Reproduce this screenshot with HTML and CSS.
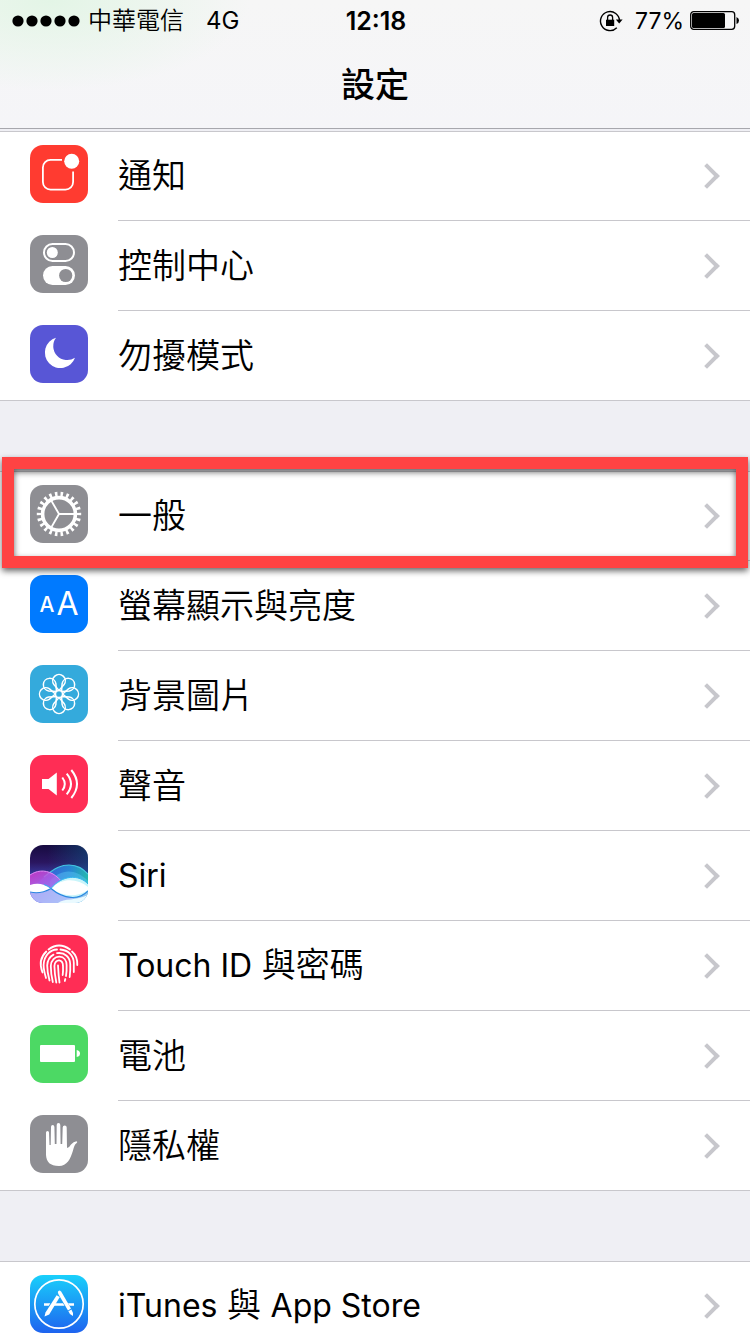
FILE: index.html
```html
<!DOCTYPE html>
<html lang="zh-Hant">

<head>
    <meta charset="UTF-8">
    <meta name="viewport" content="width=device-width, initial-scale=1.0">
    <title>設定</title>
    <link rel="stylesheet" href="styles.css">
</head>

<body>
    <header class="topbar">
        <div class="status">
            <div class="status-left">
                <svg class="signal" viewBox="0 0 68 12">
                    <circle cx="6" cy="6" r="5.6" />
                    <circle cx="20" cy="6" r="5.6" />
                    <circle cx="34" cy="6" r="5.6" />
                    <circle cx="48" cy="6" r="5.6" />
                    <circle cx="62" cy="6" r="5.6" />
                </svg>
                <span>中華電信</span>
                <span class="network">4G</span>
            </div>
            <div class="clock">12:18</div>
            <div class="status-right">
                <svg class="lock" viewBox="0 0 24 22">
                    <path d="M20.500 11A9.500 9.500 0 1 0 17.800 17.700" fill="none" stroke="#000" stroke-width="1.400" />
                    <path d="M16.800 9.500h6.800l-3.400 4z" />
                    <path d="M7 9.700h8.200v6.300H7z" />
                    <path d="M8.600 10V7.500a2.500 2.500 0 0 1 5 0V10" fill="none" stroke="#000" stroke-width="1.300" />
                </svg>
                <span class="percent">77%</span>
                <svg class="battery" viewBox="0 0 50 20">
                    <rect x=".7" y=".7" width="44" height="17.600" rx="3" fill="none" stroke="#000" stroke-width="1.300" />
                    <rect x="2" y="2" width="33" height="15" rx="1.500" />
                    <path d="M46.500 6q2.500 1 2.500 3.500t-2.500 3.500z" />
                </svg>
            </div>
        </div>
        <h1 class="title">設定</h1>
    </header>

    <main class="settings">
        <ul class="group">
            <li class="row">
                <a href="#notifications">
                    <svg class="icon red" viewBox="0 0 58 58">
                        <path d="M32 14.900H20.500a7.600 7.600 0 0 0-7.600 7.600V37a7.600 7.600 0 0 0 7.600 7.600H35.500a7.600 7.600 0 0 0 7.600-7.600V26.500" fill="none" stroke="#fff" stroke-width="1.800" />
                        <circle cx="41.700" cy="16.300" r="7.500" fill="#fff" />
                    </svg>
                    <span class="label">通知</span>
                </a>
            </li>
            <li class="row">
                <a href="#control-center">
                    <svg class="icon gray" viewBox="0 0 58 58">
                        <rect x="14" y="9" width="30" height="17" rx="8.500" fill="none" stroke="#fff" stroke-width="2" />
                        <circle cx="22.300" cy="17.500" r="5.500" fill="#fff" />
                        <rect x="13" y="31" width="32" height="19" rx="9.500" fill="#fff" />
                        <circle cx="35.700" cy="40.500" r="6.600" fill="#8e8e93" />
                    </svg>
                    <span class="label">控制中心</span>
                </a>
            </li>
            <li class="row">
                <a href="#do-not-disturb">
                    <svg class="icon purple" viewBox="0 0 58 58">
                        <path d="M26 12.700A15.500 15.500 0 1 0 45 32.700A14 14 0 0 1 26 12.700z" fill="#fff" />
                    </svg>
                    <span class="label">勿擾模式</span>
                </a>
            </li>
        </ul>

        <ul class="group">
            <li class="row marked">
                <a href="#general">
                    <svg class="icon gray" viewBox="0 0 58 58">
                        <g fill="none" stroke="#fff">
                            <circle cx="29" cy="29" r="19.800" stroke-width="4.800" pathLength="44" stroke-dasharray=".9 1.1" stroke-dashoffset=".45" />
                            <circle cx="29" cy="29" r="16.400" stroke-width="3.600" />
                            <path d="M29 29H45M29 29L21 15.100M29 29L21 42.900" stroke-width="1.900" />
                        </g>
                    </svg>
                    <span class="label">一般</span>
                </a>
            </li>
            <li class="row">
                <a href="#display">
                    <svg class="icon blue" viewBox="0 0 58 58">
                        <text class="glyph small" x="17" y="37">A</text>
                        <text class="glyph" x="37.500" y="40">A</text>
                    </svg>
                    <span class="label">螢幕顯示與亮度</span>
                </a>
            </li>
            <li class="row">
                <a href="#wallpaper">
                    <svg class="icon sky" viewBox="0 0 58 58">
                        <defs>
                            <path id="petal" d="M29 25.400L23.900 19.500A6.300 6.300 0 1 1 34.100 19.500z" />
                        </defs>
                        <g fill="none" stroke="#fff" stroke-width="1.500">
                            <use href="#petal" />
                            <use href="#petal" transform="rotate(45 29 29)" />
                            <use href="#petal" transform="rotate(90 29 29)" />
                            <use href="#petal" transform="rotate(135 29 29)" />
                            <use href="#petal" transform="rotate(180 29 29)" />
                            <use href="#petal" transform="rotate(225 29 29)" />
                            <use href="#petal" transform="rotate(270 29 29)" />
                            <use href="#petal" transform="rotate(315 29 29)" />
                            <circle cx="29" cy="29" r="3.600" />
                        </g>
                    </svg>
                    <span class="label">背景圖片</span>
                </a>
            </li>
            <li class="row">
                <a href="#sounds">
                    <svg class="icon pink" viewBox="0 0 58 58">
                        <path d="M12 24h6.500l8.300-6.500v23L18.500 34H12z" fill="#fff" />
                        <path d="M32.300 22.500q5 6.500 0 13M36.700 18.700q8.600 10.300 0 20.600M41.300 15q11.400 14 0 28" fill="none" stroke="#fff" stroke-width="2" />
                    </svg>
                    <span class="label">聲音</span>
                </a>
            </li>
            <li class="row">
                <a href="#siri">
                    <svg class="icon" viewBox="0 0 58 58">
                        <defs>
                            <linearGradient id="night" x1="0" y1="0" x2="0" y2="1">
                                <stop offset="0" stop-color="#170b40" />
                                <stop offset=".3" stop-color="#2a1660" />
                                <stop offset=".55" stop-color="#3a3fa8" />
                                <stop offset="1" stop-color="#7fb4f5" />
                            </linearGradient>
                            <linearGradient id="aqua" x1="0" y1="0" x2="1" y2="0">
                                <stop offset=".3" stop-color="#0c5a86" stop-opacity="0" />
                                <stop offset="1" stop-color="#0c5a86" />
                            </linearGradient>
                            <linearGradient id="magenta" x1="0" y1="0" x2="1" y2="1">
                                <stop offset="0" stop-color="#e238d0" />
                                <stop offset=".5" stop-color="#a86cf0" />
                                <stop offset="1" stop-color="#a9c4fb" />
                            </linearGradient>
                            <linearGradient id="teal" x1="0" y1="0" x2="1" y2="0">
                                <stop offset=".2" stop-color="#3a62e8" />
                                <stop offset=".7" stop-color="#279be6" />
                                <stop offset="1" stop-color="#25d3b4" />
                            </linearGradient>
                        </defs>
                        <path d="M0 0H58V58H0z" fill="url(#night)" />
                        <path d="M0 0H58V40H0z" fill="url(#aqua)" opacity=".5" />
                        <path d="M14 32C26 22 32 20 39 20C48 20 53 24 58 29V58H0V45z" fill="url(#teal)" opacity=".8" />
                        <path d="M14 32C26 22 32 20 39 20C48 20 53 24 58 29" fill="none" stroke="#43c4e0" stroke-width="1.200" />
                        <path d="M20 36C30 25 44 22 58 36V50H20z" fill="#5cc8f5" opacity=".45" />
                        <path d="M0 30C6 26 14 24 23 29C30 33 38 44 45 52L36 58H0z" fill="url(#magenta)" opacity=".8" />
                        <path d="M0 30C6 26 14 24 23 29C30 33 38 44 45 52" fill="none" stroke="#e08af5" />
                        <path d="M0 46C8 49 14 47 21 43C34 55 49 56 58 46V58H0z" fill="#b4c8fa" opacity=".75" />
                        <path d="M28 58C34 53 46 56 58 50V58z" fill="#eafaff" />
                        <path d="M0 40C8 37.500 14 39 21 43.500C15 47.500 8 48.500 0 47z" fill="#fff" />
                        <path d="M21 43.500C32 30 49 29 58 39V46C49 55.500 34 54.500 21 43.500z" fill="#c9f5fa" />
                        <path d="M21 43.500C32 32.500 47 33 58 42V45C47 52.500 33 52 21 43.500z" fill="#fff" />
                        <path d="M0 47C8 49 14 47.500 21 43.500C34 54.500 49 55.500 58 46" fill="none" stroke="#2a86e0" stroke-width="1.200" />
                        <path d="M14 39.500Q18 41 21 43.500C32 30 49 29 58 39" fill="none" stroke="#2fb5ee" />
                    </svg>
                    <span class="label"><span class="latin">Siri</span></span>
                </a>
            </li>
            <li class="row">
                <a href="#touch-id">
                    <svg class="icon pink" viewBox="0 0 58 58">
                        <g fill="none" stroke="#fff" stroke-width="1.800" stroke-linecap="round">
                            <path d="M18.500 14.500Q29 6.500 40 14.500" />
                            <path d="M12.500 37.500C9.500 30 10.500 22 16.300 16.500M42 16.500C46 20 47.500 25 47.300 30" />
                            <path d="M16 43C14.500 38 13.600 34 13.600 30C14 20 20.500 14.800 27 14.500M30.500 14.500C38 15 43.700 20.500 43.800 28V37" />
                            <path d="M19.500 45.500C18 40 17.200 35 17.200 30.500C17.500 25 20 21.500 23.500 19.600M27 18.200C35 17 40 22.500 40.200 29C40.500 34 40.200 37.500 39.700 42" />
                            <path d="M22.800 47C21.500 41.500 20.800 37 20.800 31C21 25 25 21.500 29.500 21.700C34 22 36.500 25.500 36.600 30C36.800 34.500 36.500 38 36 41M35.300 44L34.800 46" />
                            <path d="M26.300 47.500C25 41 24.500 37 24.400 31C24.600 27 27 25.200 29.300 25.400C32 25.800 33 28 33 31C33.200 34.500 33 37.500 32.700 40" />
                            <path d="M29.500 47.500C28.700 42 28.300 37 28 30.500" />
                        </g>
                    </svg>
                    <span class="label"><span><span class="latin">Touch ID</span> 與密碼</span></span>
                </a>
            </li>
            <li class="row">
                <a href="#battery">
                    <svg class="icon green" viewBox="0 0 58 58">
                        <rect x="10" y="20" width="35" height="17" rx="1" fill="#fff" />
                        <path d="M46.700 25q3.300.500 3.300 3.500t-3.300 3.500z" fill="#fff" />
                    </svg>
                    <span class="label">電池</span>
                </a>
            </li>
            <li class="row">
                <a href="#privacy">
                    <svg class="icon gray" viewBox="0 0 58 58">
                        <path d="M16 17.500q0-1.500 1.500-1.500t1.500 1.500L19.500 30H20.700L21 12q0-2 1.700-2t1.700 2L24.800 29H26.500L26.700 10q0-2 1.800-2t1.800 2L30.600 29H32.200L32.700 12.500q0-2 2-2t2 2L37 33Q39 33 41 29.500Q43.500 26.500 46.500 26.300Q48 26.700 46.700 28C44.500 29.500 44 32 43 35.500C40.500 44 37 51 29 51C20 51 16.500 47 16 40z" fill="#fff" />
                    </svg>
                    <span class="label">隱私權</span>
                </a>
            </li>
        </ul>

        <ul class="group">
            <li class="row">
                <a href="#stores">
                    <svg class="icon" viewBox="0 0 58 58">
                        <defs>
                            <linearGradient id="store" x1="0" y1="0" x2="0" y2="1">
                                <stop offset="0" stop-color="#19d0fb" />
                                <stop offset="1" stop-color="#1e63ef" />
                            </linearGradient>
                        </defs>
                        <path d="M0 0H58V58H0z" fill="url(#store)" />
                        <circle cx="29" cy="29" r="24.200" fill="none" stroke="#fff" stroke-width="1.700" />
                        <path d="M14 28.200h6.300l-1.500 2.600H14zM24.300 28.200H33l1.500 2.600H22.800zM38 28.200h6v2.600h-4.500z" fill="#fff" />
                        <path d="M26.600 20.300L29.800 22.100L19.200 39.500L14.500 41.500L15.500 37.500z" fill="#fff" />
                        <path d="M27.800 17Q29 14 31.300 16.800L41 33.600L38 35.500L28.300 19z" fill="#fff" />
                        <path d="M38.400 36.200L41.400 34.500Q43.500 37.500 43 41Q39.300 39.500 38.400 36.200z" fill="#fff" />
                    </svg>
                    <span class="label"><span><span class="latin">iTunes</span> 與 <span class="latin">App Store</span></span></span>
                </a>
            </li>
        </ul>
    </main>
</body>

</html>
```
FILE: styles.css
```css
* {
    margin: 0;
    padding: 0;
    box-sizing: border-box;
}

body {
    height: 100vh;
    display: flex;
    flex-direction: column;
    overflow: hidden;
    background-color: #efeff4;
    color: #000;
    font-family: "Inter", "Noto Sans CJK TC", sans-serif;
}

/* status bar and title */
.topbar {
    flex: none;
    background: radial-gradient(ellipse 200px 90px at 50px 0, #e3f5e6, transparent), linear-gradient(#f6f6f6, #f5f5f8);
    border-bottom: 1px solid #a7a7ad;
}

.status {
    height: 42px;
    padding: 0 10px 0 12px;
    display: grid;
    grid-template-columns: 1fr auto 1fr;
    align-items: center;
    font-size: 24px;
    line-height: 42px;
}

.status-left,
.status-right {
    display: flex;
    align-items: center;
    gap: 8px;
    font-weight: 350;
}

.status-right {
    justify-content: flex-end;
    gap: 6px;
    font-weight: 400;
}

.signal {
    width: 68px;
    height: 12px;
}

.network {
    margin-left: 14px;
    font-weight: 400;
}

.clock {
    font-size: 25px;
    font-weight: 600;
}

.lock {
    width: 24px;
    height: 22px;
    margin-right: 6px;
}

.percent {
    font-size: 23px;
}

.battery {
    width: 50px;
    height: 20px;
}

.title {
    height: 86px;
    font-size: 34px;
    line-height: 86px;
    font-weight: 500;
    text-align: center;
}

/* list */
.settings {
    flex: 1;
    padding-top: 2px;
    display: flex;
    flex-direction: column;
    gap: 70px;
    overflow-y: auto;
    scrollbar-width: none;
}

.group {
    flex: none;
    list-style: none;
    background-color: #fff;
}

.row {
    position: relative;
}

.row:first-child {
    box-shadow: inset 0 1px #c8c7cc;
}

.row:last-child {
    border-bottom: 1px solid #c8c7cc;
}

.row a {
    display: flex;
    align-items: center;
    gap: 30px;
    padding-left: 30px;
    color: #000;
    text-decoration: none;
}

.icon {
    flex: none;
    width: 58px;
    height: 58px;
    margin-bottom: 4px;
    border-radius: 13px;
}

.label {
    flex: 1;
    height: 90px;
    padding-right: 30px;
    display: flex;
    align-items: center;
    justify-content: space-between;
    border-bottom: 1px solid #c8c7cc;
    font-size: 34px;
    font-weight: 350;
    line-height: 40px;
}

.row:last-child .label {
    height: 89px;
    border-bottom: 0;
}

.label::after {
    content: "";
    width: 14px;
    height: 14px;
    margin-right: 4px;
    border-top: 4px solid #c7c7cc;
    border-right: 4px solid #c7c7cc;
    transform: rotate(45deg);
}

.latin {
    font-size: 32px;
    font-weight: 400;
}

.red {
    background-color: #ff3b30;
}

.gray {
    background-color: #8e8e93;
}

.purple {
    background-color: #5856d6;
}

.blue {
    background-color: #007aff;
}

.sky {
    background-color: #34aadc;
}

.pink {
    background-color: #ff2d55;
}

.green {
    background-color: #4cd964;
}

.glyph {
    fill: #fff;
    font-size: 32px;
    text-anchor: middle;
}

.glyph.small {
    font-size: 21px;
    font-weight: 500;
}

/* frame around the highlighted row */
.marked::after {
    content: "";
    position: absolute;
    z-index: 1;
    top: -14px;
    right: 2px;
    bottom: -7px;
    left: 2px;
    border: 12px solid #ff4343;
    filter: drop-shadow(0 3px 3px rgba(0, 0, 0, 0.6));
    pointer-events: none;
}
```
